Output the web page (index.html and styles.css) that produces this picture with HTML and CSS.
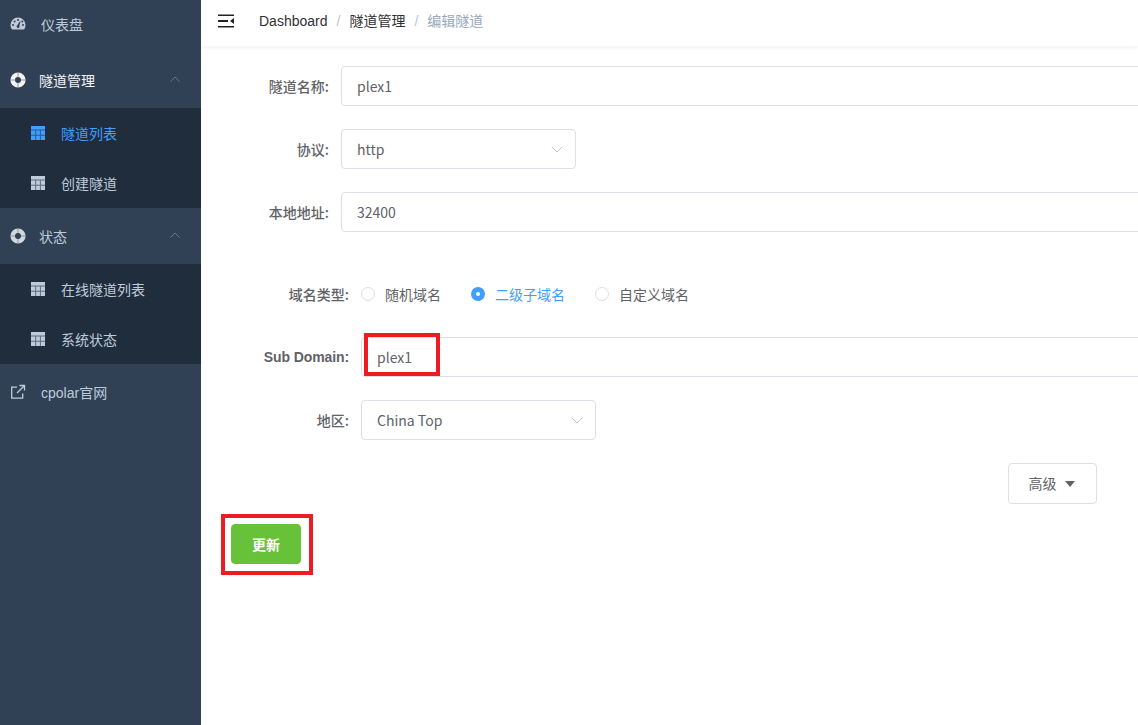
FILE: index.html
```html
<!DOCTYPE html>
<html lang="zh-CN">
<head>
<meta charset="utf-8">
<title>编辑隧道</title>
<link rel="stylesheet" href="styles.css">
</head>
<body>
<svg class="defs" width="0" height="0" aria-hidden="true">
  <symbol id="i-table" viewBox="0 0 14 14">
    <path fill="currentColor" d="M0 0h14v14H0z"/>
    <path fill="#1f2d3d" opacity=".6" d="M0 3.600h14v1H0zM0 8.800h14v1H0zM4.200 4h1v10h-1zM8.900 4h1v10h-1z"/>
  </symbol>
  <symbol id="i-buoy" viewBox="0 0 16 16">
    <circle cx="8" cy="8" r="5.300" fill="none" stroke="currentColor" stroke-width="4.600"/>
    <path fill="none" stroke="#8f7f70" stroke-width=".8" d="M.500 8H5M11 8h4.500M8 .5V5M8 11v4.500"/>
  </symbol>
</svg>
<div class="layout">
  <aside class="sidebar">
    <a class="item">
      <svg class="ico" viewBox="0 0 16 16"><path fill="currentColor" fill-rule="evenodd" d="M8 1.500A7.500 7.500 0 0 0 .5 9c0 1.500.4 2.800 1.100 4a.9.9 0 0 0 .8.500h11.200a.9.9 0 0 0 .8-.5c.7-1.200 1.100-2.500 1.100-4A7.500 7.500 0 0 0 8 1.500ZM3 10a1 1 0 1 1 0-2 1 1 0 0 1 0 2Zm1.600-3.500a1 1 0 1 1 0-2 1 1 0 0 1 0 2ZM8 5a1 1 0 1 1 0-2 1 1 0 0 1 0 2Zm0 7a1.500 1.500 0 0 1-.7-2.800l2.600-4 .7.300-1.300 4.400A1.500 1.500 0 0 1 8 12Zm5-2a1 1 0 1 1 0-2 1 1 0 0 1 0 2Zm-.7-3.600a1 1 0 1 1 0-2 1 1 0 0 1 0 2Z"/></svg>
      <span>仪表盘</span>
    </a>
    <div class="group open">
      <svg class="ico buoy"><use href="#i-buoy"/></svg>
      <span>隧道管理</span>
      <svg class="caret" viewBox="0 0 12 8"><path d="M1.500 6.500 6 2l4.500 4.500" fill="none" stroke="currentColor"/></svg>
    </div>
    <ul class="sub">
      <li class="active"><svg class="tbl"><use href="#i-table"/></svg><span>隧道列表</span></li>
      <li><svg class="tbl"><use href="#i-table"/></svg><span>创建隧道</span></li>
    </ul>
    <div class="group">
      <svg class="ico buoy"><use href="#i-buoy"/></svg>
      <span>状态</span>
      <svg class="caret" viewBox="0 0 12 8"><path d="M1.500 6.500 6 2l4.500 4.500" fill="none" stroke="currentColor"/></svg>
    </div>
    <ul class="sub">
      <li><svg class="tbl"><use href="#i-table"/></svg><span>在线隧道列表</span></li>
      <li><svg class="tbl"><use href="#i-table"/></svg><span>系统状态</span></li>
    </ul>
    <a class="item">
      <svg class="ico" viewBox="0 0 16 16"><path fill="none" stroke="currentColor" stroke-width="1.300" d="M7 3.200H1.700v11h11V9.500M9.500 1.500h5v5M14.300 1.700 7 9"/></svg>
      <span>cpolar官网</span>
    </a>
  </aside>
  <main class="main">
    <header class="navbar">
      <svg class="hamburger" viewBox="0 0 16 14"><path fill="#222" d="M0 .5h16v1.500H0zM0 6h10v2H0zM0 12h16v1.500H0zM12 7l4-3v6z"/></svg>
      <nav class="crumbs">
        <span>Dashboard</span><i>/</i><span>隧道管理</span><i>/</i><span class="current">编辑隧道</span>
      </nav>
    </header>
    <form class="form">
      <div class="row"><label>隧道名称:</label><div class="input">plex1</div></div>
      <div class="row"><label>协议:</label><div class="input select">http<svg class="chev" viewBox="0 0 12 7"><path d="M.8.800 6 6 11.200.8" fill="none" stroke="currentColor"/></svg></div></div>
      <div class="row"><label>本地地址:</label><div class="input">32400</div></div>
      <div class="nested">
        <div class="row radios">
          <label>域名类型:</label>
          <div class="radio"><b></b>随机域名</div>
          <div class="radio on"><b></b>二级子域名</div>
          <div class="radio"><b></b>自定义域名</div>
        </div>
        <div class="row"><label class="en">Sub Domain:</label><div class="input sub-input">plex1<span class="mark mark-input"></span></div></div>
        <div class="row"><label>地区:</label><div class="input select">China Top<svg class="chev" viewBox="0 0 12 7"><path d="M.8.800 6 6 11.200.8" fill="none" stroke="currentColor"/></svg></div></div>
      </div>
      <div class="adv-row"><button type="button" class="adv">高级<em></em></button></div>
      <div class="submit-row"><button type="button" class="update">更新</button><span class="mark mark-btn"></span></div>
    </form>
  </main>
</div>
</body>
</html>
```
FILE: styles.css
```css
* { box-sizing: border-box; }
html, body { margin: 0; height: 100%; overflow: hidden; }
body {
  font-family: "Noto Sans CJK SC", "Noto Sans", sans-serif;
  font-size: 14px;
  color: #606266;
  background: #fff;
}
.defs { position: absolute; }
.layout { display: flex; height: 725px; }

.sidebar {
  width: 201px;
  flex: none;
  background: #304156;
  color: #bfcbd9;
  margin-top: -4px;
  height: 729px;
  font-family: "Liberation Sans", "Noto Sans CJK SC", sans-serif;
}
.item, .group {
  display: flex;
  align-items: center;
  height: 56px;
  padding-left: 10px;
}
.ico { width: 16px; height: 16px; flex: none; }
.item span { margin-left: 15px; }
.group { position: relative; color: #f4f4f5; }
.group span { margin-left: 13px; }
.group:not(.open) { color: #bfcbd9; }
.group:not(.open) .buoy { color: #cfd8e3; }
.caret { position: absolute; left: 169px; top: 23px; width: 12px; height: 8px; color: #6b7786; }
.sub { list-style: none; margin: 0; padding: 0; background: #1f2d3d; }
.sub li { display: flex; align-items: center; height: 50px; padding-left: 31px; }
.sub li span { margin-left: 16px; }
.sub .tbl { width: 14px; height: 14px; flex: none; color: #bfcbd9; }
.sub .active { color: #409eff; }
.sub .active .tbl { color: #409eff; }

.main { flex: 1; min-width: 0; overflow: hidden; }
.navbar {
  display: flex;
  align-items: center;
  height: 46px;
  padding: 0 0 4px 17px;
  box-shadow: 0 1px 4px rgba(0, 21, 41, .08);
}
.hamburger { width: 16px; height: 14px; flex: none; }
.crumbs {
  margin-left: 25px;
  margin-top: -2px;
  color: #303133;
  font-family: "Liberation Sans", "Noto Sans CJK SC", sans-serif;
}
.crumbs i { font-style: normal; color: #c0c4cc; margin: 0 9px; }
.crumbs .current { color: #97a8be; }

.form { padding-top: 20px; position: relative; }
.row { display: flex; align-items: center; margin-bottom: 23px; }
.row label {
  width: 140px;
  padding-right: 12px;
  text-align: right;
  font-weight: 500;
  white-space: nowrap;
  flex: none;
}
.nested { margin-top: 43px; }
.nested .row label { width: 160px; }
.nested .radios { height: 38px; margin-bottom: 24px; }
.row .en {
  font-family: "Liberation Sans", sans-serif;
  font-weight: 700;
  letter-spacing: -.1px;
}
.input {
  position: relative;
  flex: none;
  width: 900px;
  height: 40px;
  line-height: 38px;
  padding-left: 15px;
  border: 1px solid #dcdfe6;
  border-radius: 4px;
  background: #fff;
}
.select { width: 235px; }
.chev { position: absolute; right: 12px; top: 16px; width: 12px; height: 7px; color: #c0c4cc; }
.radios .radio { display: flex; align-items: center; margin-right: 30px; }
.radio b {
  width: 14px; height: 14px;
  margin-right: 10px;
  border: 1px solid #dcdfe6;
  border-radius: 50%;
  background: #fff;
  flex: none;
}
.radio.on { color: #409eff; }
.radio.on b { border: 5px solid #409eff; background: #fff; }

.adv-row { display: flex; justify-content: flex-end; padding-right: 41px; }
.adv {
  width: 89px;
  height: 41px;
  font: inherit;
  color: #606266;
  background: #fff;
  border: 1px solid #dcdfe6;
  border-radius: 4px;
  padding: 0 2px 2px 0;
}
.adv em {
  display: inline-block;
  margin-left: 8px;
  border: 5px solid transparent;
  border-top: 6px solid #606266;
  border-bottom: 0;
  vertical-align: 2px;
}
.submit-row { position: relative; margin: 20px 0 0 30px; }
.update {
  display: block;
  width: 70px;
  height: 40px;
  font: inherit;
  font-weight: 700;
  color: #fff;
  background: #67c23a;
  border: 1px solid #67c23a;
  border-radius: 4px;
  padding: 0;
}
.mark { position: absolute; border: 4px solid #ed1c24; pointer-events: none; }
.mark-input { left: 2px; top: -5px; width: 76px; height: 43px; }
.mark-btn { left: -10px; top: -10px; width: 92px; height: 61px; }
```
